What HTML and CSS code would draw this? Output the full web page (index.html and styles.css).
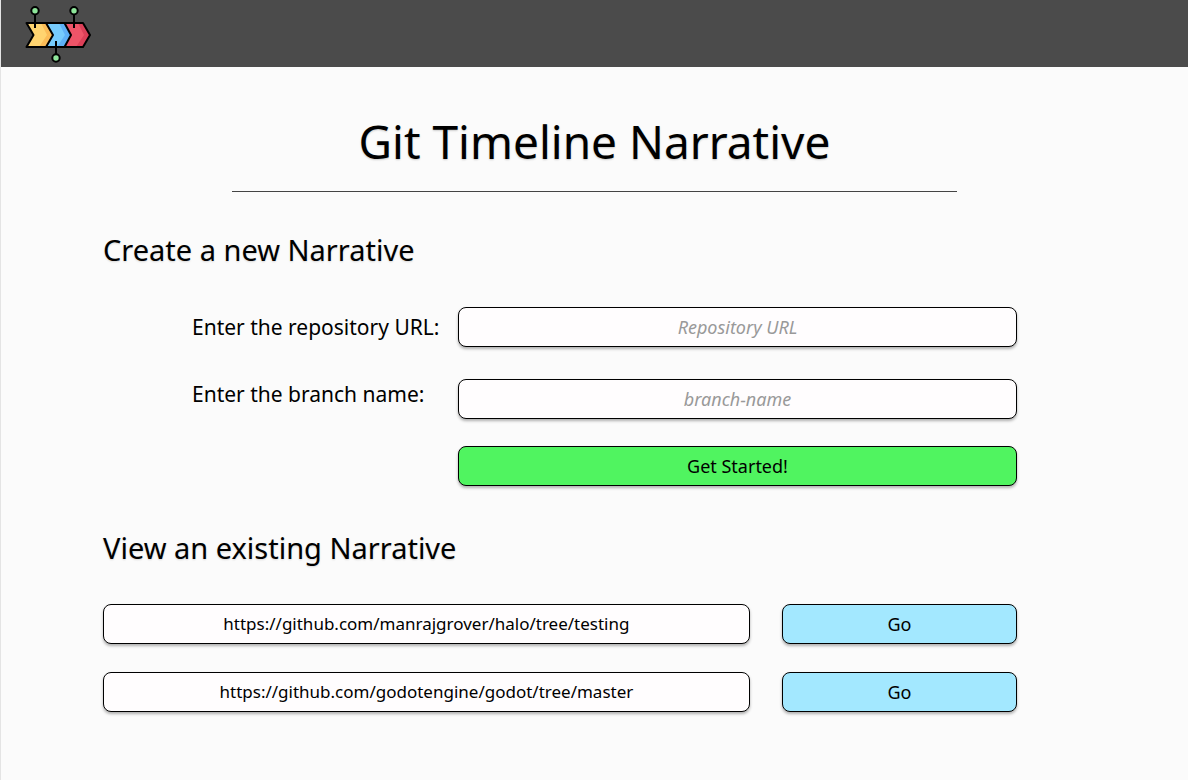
FILE: index.html
```html
<!DOCTYPE html>
<html lang="en">
<head>
<meta charset="utf-8">
<meta name="viewport" content="width=device-width, initial-scale=1">
<title>Git Timeline Narrative</title>
<link rel="stylesheet" href="styles.css">
</head>
<body>
<header class="topbar">
  <a class="brand" href="#" aria-label="Home">
    <svg class="logo" width="66" height="58" viewBox="0 0 66 58" aria-hidden="true">
      <path d="M1.5 18H21L28 30L21 42H1.5L8.5 30Z" fill="#ffd470"/>
      <path d="M21 18H39.5L46 30L39.5 42H21L28 30Z" fill="#76cbfc"/>
      <path d="M39.5 18H58L65 30L58 42H39.5L46 30Z" fill="#ee5468"/>
      <path d="M16 18H21L28 30L21 42H14L22 30Z" fill="#fbbc57"/>
      <path d="M34 18H39.5L46 30L39.5 42H32L40 30Z" fill="#5eb0f6"/>
      <path d="M53 18H58L65 30L58 42H51L59 30Z" fill="#dc4058"/>
      <g fill="none" stroke="#000" stroke-width="2" stroke-linejoin="round">
        <path d="M1.5 18H58L65 30L58 42H1.5L8.5 30Z"/>
        <path d="M21 18L28 30L21 42M39.5 18L46 30L39.5 42M10 9V23M49 9V23M31 36V50"/>
      </g>
      <g fill="#8ee59a" stroke="#000" stroke-width="2">
        <circle cx="10" cy="5.7" r="3.7"/>
        <circle cx="49" cy="5.7" r="3.7"/>
        <circle cx="31" cy="53" r="3.7"/>
      </g>
    </svg>
  </a>
</header>
<main class="page">
  <h1 class="title">Git Timeline Narrative</h1>
  <section class="content">
    <h2 class="heading">Create a new Narrative</h2>
    <form class="create">
      <div class="labels">
        <label class="label" for="repo">Enter the repository URL:</label>
        <label class="label" for="branch">Enter the branch name:</label>
      </div>
      <div class="fields">
        <input class="box field" id="repo" type="text" placeholder="Repository URL">
        <input class="box field" id="branch" type="text" placeholder="branch-name">
        <button class="box start" type="button">Get Started!</button>
      </div>
    </form>
  </section>
  <section class="content">
    <h2 class="heading">View an existing Narrative</h2>
    <ul class="list">
      <li class="row">
        <span class="box url">https://github.com/manrajgrover/halo/tree/testing</span>
        <button class="box go" type="button">Go</button>
      </li>
      <li class="row">
        <span class="box url">https://github.com/godotengine/godot/tree/master</span>
        <button class="box go" type="button">Go</button>
      </li>
    </ul>
  </section>
</main>
</body>
</html>
```
FILE: styles.css
```css
* {
  box-sizing: border-box;
}

body {
  margin: 0;
  min-height: 100vh;
  border-left: 1px solid #e4e4e4;
  background: #fbfbfb;
  color: #000;
  font-family: "Noto Sans", "Open Sans", sans-serif;
}

.topbar {
  display: flex;
  padding: 5px 24px 4px;
  background: #4b4b4b;
}

.brand,
.logo {
  display: block;
}

.title {
  width: 61%;
  margin: 0 auto;
  padding: 40px 0 16px;
  border-bottom: 1px solid #444;
  font-size: 46px;
  font-weight: 400;
  line-height: 68px;
  text-align: center;
  text-shadow: 0 1px 2px rgba(0, 0, 0, 0.2);
  white-space: nowrap;
}

.content {
  padding: 38px 171px 0 102px;
}

.heading {
  margin: 0;
  font-size: 29px;
  font-weight: 400;
  line-height: 40px;
  text-shadow: 0 1px 2px rgba(0, 0, 0, 0.15);
}

.create {
  display: grid;
  grid-template-columns: 250px 1fr;
  gap: 16px;
  align-items: start;
  margin-top: 37px;
  padding: 0 0 4px 89px;
}

.labels {
  display: grid;
  gap: 27px;
}

.label {
  font-size: 21px;
  line-height: 40px;
  white-space: nowrap;
}

.fields {
  display: flex;
  flex-direction: column;
}

.box {
  height: 40px;
  border: 1px solid #000;
  border-radius: 8px;
  background: #fffdfe;
  box-shadow: 0 2px 3px rgba(0, 0, 0, 0.3);
  color: #000;
  font-family: inherit;
  font-size: 18px;
  line-height: 36px;
  text-align: center;
}

.field {
  width: 100%;
  min-width: 0;
  margin-bottom: 32px;
  padding: 0 12px;
}

.field::placeholder {
  color: #999;
  font-style: italic;
  opacity: 1;
}

.field + .field {
  margin-bottom: 27px;
}

.start,
.go {
  padding: 0 6px;
}

.start {
  background: #50f460;
}

.list {
  display: grid;
  gap: 28px;
  margin: 36px 0 0;
  padding: 0;
  list-style: none;
}

.row {
  display: grid;
  grid-template-columns: 11fr 4fr;
  gap: 32px;
}

.url {
  font-size: 17px;
  line-height: 38px;
}

.go {
  background: #a3e8ff;
}
```
